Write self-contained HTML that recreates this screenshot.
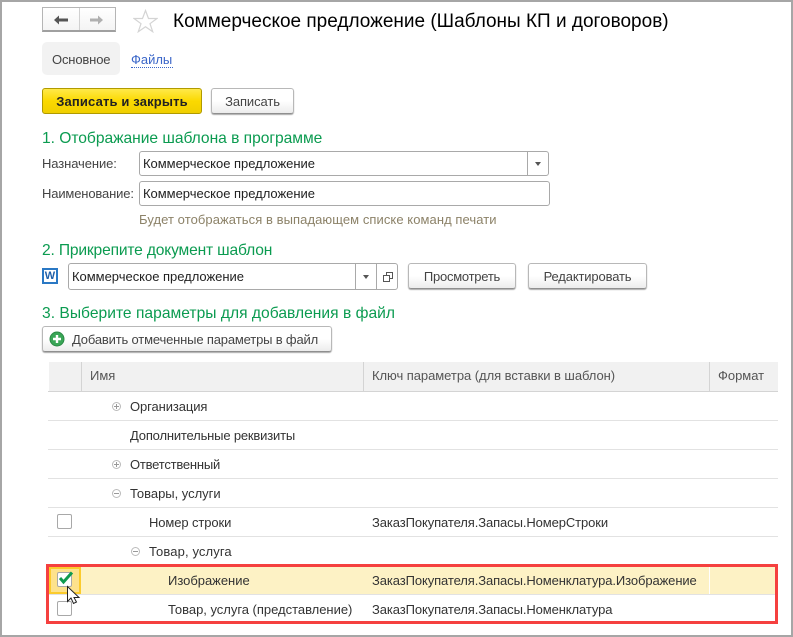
<!DOCTYPE html>
<html><head><meta charset="utf-8">
<style>
*{box-sizing:border-box}
html,body{margin:0;padding:0;background:#fff}
#p{position:relative;width:793px;height:637px;overflow:hidden;background:#fff;font:13px/14px "Liberation Sans",sans-serif;color:#333}
#p div,#p span.a,#p svg{position:absolute}
.t{white-space:nowrap;letter-spacing:-.02px}
.g{color:#0b9b50;font-size:15.6px;line-height:18px;white-space:nowrap}
.btn{border:1px solid #b8b8b8;border-bottom-color:#8f8f8f;border-radius:3px;background:linear-gradient(#fff,#fff 50%,#ececec);box-shadow:0 1px 1px #aaa;text-align:center;white-space:nowrap;color:#444}
.in{border:1px solid #a9a9a9;border-radius:3px;background:#fff}
.l{left:48px;width:730px;height:1px;background:#e2e2e2}
.cb{width:15px;height:15px;border:1px solid #a8a8a8;border-radius:2px;background:#fff}
</style></head><body>
<div id="p">
<div style="left:0;top:0;width:793px;height:637px;border:2px solid #a6a6a6"></div>

<div style="left:42px;top:7px;width:74px;height:25px;border:1px solid #b5b5b5;border-bottom:2px solid #a0a0a0;background:linear-gradient(#fff,#f4f4f4)"></div>
<div style="left:79px;top:8px;width:1px;height:22px;background:#d0d0d0"></div>
<svg style="left:52px;top:12px" width="60" height="15" viewBox="0 0 60 15"><path d="M2 8L7 3.500v3h9v3H7v3z" fill="#555"/><path d="M38 6.500h8v-3l5 4.500-5 4.500v-3h-8z" fill="#b0b0b0"/></svg>
<svg style="left:133px;top:9px" width="25" height="24" viewBox="0 0 25 24"><path d="M12.500 1.500l3 8h8.500l-7 5.200 2.700 8-7.200-5-7.200 5 2.700-8-7-5.200h8.500z" fill="#fff" stroke="#d4d4d4" stroke-width="1.200"/></svg>
<div class="t" style="left:173px;top:11px;font-size:19px;line-height:21px;color:#000;letter-spacing:0">Коммерческое предложение (Шаблоны КП и договоров)</div>

<div style="left:42px;top:42px;width:78px;height:33px;background:#f2f2f2;border-radius:5px"></div>
<div class="t" style="left:52px;top:53px;color:#444;letter-spacing:-.15px">Основное</div>
<div class="t" style="left:131px;top:53px;color:#3a66c8;border-bottom:1px dotted #3a66c8;height:15px;padding:0 1px 0 0">Файлы</div>

<div class="t" style="left:42px;top:88px;width:160px;height:26px;border:1px solid #b09a00;border-radius:3px;background:linear-gradient(#ffe94a,#fbd900 50%,#f0cf00);text-align:center;line-height:25px;font-weight:bold;color:#222;letter-spacing:.15px">Записать и закрыть</div>
<div class="btn" style="left:211px;top:88px;width:83px;height:26px;line-height:25px;letter-spacing:-.1px">Записать</div>

<div class="g" style="left:42px;top:130px;letter-spacing:-.03px">1. Отображание шаблона в программе</div>
<div class="t" style="left:42px;top:157px;color:#444;letter-spacing:-.1px">Назначение:</div>
<div class="in" style="left:139px;top:151px;width:410px;height:25px"></div>
<div style="left:527px;top:152px;width:1px;height:23px;background:#a9a9a9"></div>
<div style="left:535px;top:162px;border:3px solid transparent;border-top:4px solid #555;border-bottom:0"></div>
<div class="t" style="left:143px;top:157px;color:#222">Коммерческое предложение</div>
<div class="t" style="left:42px;top:187px;color:#444;letter-spacing:-.15px">Наименование:</div>
<div class="in" style="left:139px;top:181px;width:411px;height:25px"></div>
<div class="t" style="left:143px;top:187px;color:#222">Коммерческое предложение</div>
<div class="t" style="left:139px;top:213px;color:#8c8268;letter-spacing:.07px">Будет отображаться в выпадающем списке команд печати</div>

<div class="g" style="left:42px;top:242px;letter-spacing:-.17px">2. Прикрепите документ шаблон</div>
<div style="left:42px;top:268px;width:16px;height:16px;border:2px solid #2a78c4;background:#fff;color:#1f5fa8;font:bold 11px/12px 'Liberation Sans',sans-serif;text-align:center;overflow:hidden">W</div>
<div class="in" style="left:68px;top:263px;width:330px;height:27px"></div>
<div style="left:355px;top:264px;width:1px;height:25px;background:#a9a9a9"></div>
<div style="left:376px;top:264px;width:1px;height:25px;background:#a9a9a9"></div>
<div style="left:363px;top:275px;border:3px solid transparent;border-top:4px solid #555;border-bottom:0"></div>
<svg style="left:383px;top:272px" width="10" height="10" viewBox="0 0 10 10"><path d="M3.500 3V.5h6v6H7M.5 3.500h6v6h-6z" fill="none" stroke="#555"/></svg>
<div class="t" style="left:72px;top:270px;color:#222">Коммерческое предложение</div>
<div class="btn" style="left:408px;top:263px;width:108px;height:26px;line-height:25px;letter-spacing:-.25px">Просмотреть</div>
<div class="btn" style="left:528px;top:263px;width:119px;height:26px;line-height:25px;letter-spacing:-.15px">Редактировать</div>

<div class="g" style="left:42px;top:305px;letter-spacing:.02px">3. Выберите параметры для добавления в файл</div>
<div class="btn" style="left:42px;top:326px;width:290px;height:26px"></div>
<svg style="left:49px;top:331px" width="16" height="16" viewBox="0 0 16 16"><circle cx="8" cy="8" r="7" fill="#3aa657" stroke="#2b8a45"/><path d="M8 4v8M4 8h8" stroke="#fff" stroke-width="2.400"/></svg>
<div class="t" style="left:72px;top:333px;color:#444;letter-spacing:-.17px">Добавить отмеченные параметры в файл</div>

<div style="left:49px;top:362px;width:729px;height:29px;background:#f1f1f1"></div>
<div style="left:81px;top:362px;width:1px;height:29px;background:#d4d4d4"></div>
<div style="left:363px;top:362px;width:1px;height:29px;background:#d4d4d4"></div>
<div style="left:709px;top:362px;width:1px;height:29px;background:#d4d4d4"></div>
<div class="l" style="top:391px;background:#d4d4d4"></div>
<div class="t" style="left:90px;top:369px;color:#555">Имя</div>
<div class="t" style="left:372px;top:369px;color:#555;letter-spacing:-.05px">Ключ параметра (для вставки в шаблон)</div>
<div class="t" style="left:718px;top:369px;color:#555">Формат</div>

<div class="l" style="top:420px"></div>
<div class="l" style="top:449px"></div>
<div class="l" style="top:478px"></div>
<div class="l" style="top:507px"></div>
<div class="l" style="top:536px"></div>

<svg style="left:112px;top:402px" width="9" height="9" viewBox="0 0 9 9"><circle cx="4.500" cy="4.500" r="4" fill="none" stroke="#bbb"/><path d="M2 4.500h5M4.500 2v5" stroke="#999"/></svg>
<div class="t" style="left:130px;top:400px;letter-spacing:-.1px">Организация</div>
<div class="t" style="left:130px;top:429px;letter-spacing:-.18px">Дополнительные реквизиты</div>
<svg style="left:112px;top:460px" width="9" height="9" viewBox="0 0 9 9"><circle cx="4.500" cy="4.500" r="4" fill="none" stroke="#bbb"/><path d="M2 4.500h5M4.500 2v5" stroke="#999"/></svg>
<div class="t" style="left:130px;top:458px;letter-spacing:-.22px">Ответственный</div>
<svg style="left:112px;top:489px" width="9" height="9" viewBox="0 0 9 9"><circle cx="4.500" cy="4.500" r="4" fill="none" stroke="#bbb"/><path d="M2 4.500h5" stroke="#999"/></svg>
<div class="t" style="left:130px;top:487px">Товары, услуги</div>
<div class="cb" style="left:57px;top:514px"></div>
<div class="t" style="left:149px;top:516px;letter-spacing:-.1px">Номер строки</div>
<div class="t" style="left:372px;top:516px;letter-spacing:-.1px">ЗаказПокупателя.Запасы.НомерСтроки</div>
<svg style="left:131px;top:547px" width="9" height="9" viewBox="0 0 9 9"><circle cx="4.500" cy="4.500" r="4" fill="none" stroke="#bbb"/><path d="M2 4.500h5" stroke="#999"/></svg>
<div class="t" style="left:149px;top:545px;letter-spacing:.12px">Товар, услуга</div>

<div style="left:49px;top:567px;width:727px;height:27px;background:#fdf2c5"></div>
<div style="left:49px;top:567px;width:32px;height:27px;background:#fde28c;border:2px solid #fbcb2c"></div>
<div style="left:709px;top:567px;width:1px;height:27px;background:#fff"></div>
<div class="l" style="top:594px;left:49px;width:727px"></div>
<div class="cb" style="left:57px;top:572px"></div>
<svg style="left:58px;top:571px" width="17" height="14" viewBox="0 0 17 14"><path d="M2 7l3.500 4L14 1.500" fill="none" stroke="#0f9b4f" stroke-width="3"/></svg>
<div class="cb" style="left:57px;top:601px"></div>
<div class="t" style="left:168px;top:574px">Изображение</div>
<div class="t" style="left:372px;top:574px;letter-spacing:-.1px">ЗаказПокупателя.Запасы.Номенклатура.Изображение</div>
<div class="t" style="left:168px;top:603px">Товар, услуга (представление)</div>
<div class="t" style="left:372px;top:603px;letter-spacing:-.1px">ЗаказПокупателя.Запасы.Номенклатура</div>

<div style="left:46px;top:564px;width:732px;height:60px;border:3px solid #f5403f"></div>
<svg style="left:66px;top:585px" width="15" height="21" viewBox="0 0 15 21"><path d="M1.500 1.500v15l3.500-3.500 2.500 5.500 3-1.500-2.500-4.500h5z" fill="#fff" stroke="#222" stroke-width="1"/></svg>
</div>
</body></html>
